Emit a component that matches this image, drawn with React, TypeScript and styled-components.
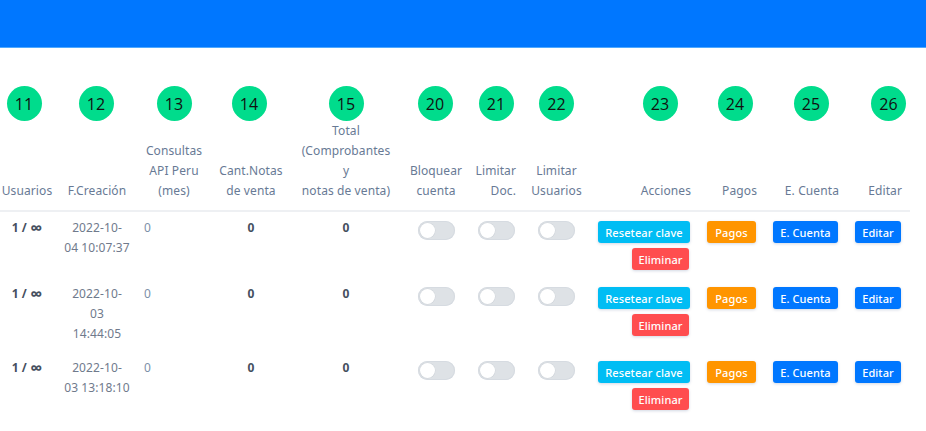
import React from "react";
import styled, { createGlobalStyle } from "styled-components";

const Global = createGlobalStyle`
  html, body { margin: 0; padding: 0; background: #ffffff; }
  body { font-family: "Noto Sans", "Open Sans", sans-serif; }
`;

const TopBar = styled.header`
  height: 47px;
  background: #0077ff;
  border-bottom: 1px solid #4fa9ff;
`;

const Content = styled.main`
  padding-top: 38px;
`;

const Table = styled.table`
  width: 910px;
  border-collapse: collapse;
  table-layout: fixed;
`;

type Align = "left" | "center" | "right";

const Col = styled.col<{ $w: number }>`
  width: ${(p) => p.$w}px;
`;

const BadgeCell = styled.th<{ $shift: number }>`
  padding: 0;
  text-align: center;
  & > span {
    transform: translateX(${(p) => p.$shift}px);
  }
`;

const Badge = styled.span`
  display: inline-flex;
  align-items: center;
  justify-content: center;
  width: 35px;
  height: 35px;
  border-radius: 50%;
  background: #00dc8c;
  color: #111111;
  font-family: "Open Sans", "Noto Sans", sans-serif;
  font-size: 16px;
  font-weight: 400;
`;

const HeadCell = styled.th<{ $align: Align; $pr?: number }>`
  vertical-align: bottom;
  text-align: ${(p) => p.$align};
  padding: 0 ${(p) => p.$pr ?? 0}px 9px 0;
  border-bottom: 2px solid #eef0f3;
  font-size: 12px;
  font-weight: 400;
  line-height: 20px;
  letter-spacing: 0.1px;
  color: #687a95;
  white-space: pre-line;
`;

const Cell = styled.td<{ $align: Align; $pl?: number; $pr?: number }>`
  vertical-align: top;
  text-align: ${(p) => p.$align};
  padding: 6px ${(p) => p.$pr ?? 0}px 8px ${(p) => p.$pl ?? 0}px;
  font-size: 12px;
  line-height: 20px;
  letter-spacing: 0.1px;
  color: #707a8c;
  white-space: pre-line;
`;

const Strong = styled.span`
  font-weight: 700;
  color: #46505f;
`;

const Infinity = styled.span`
  font-size: 17px;
  font-weight: 700;
  line-height: 20px;
  vertical-align: top;
`;

const Muted = styled.span`
  color: #7d8fa8;
`;

const Toggle = styled.span`
  display: inline-block;
  position: relative;
  width: 37px;
  height: 19px;
  border-radius: 10px;
  background: #dee2e6;
  vertical-align: top;
  box-shadow: inset 0 0 0 1px #d6dbe1;
  &::after {
    content: "";
    position: absolute;
    left: 2px;
    top: 2px;
    width: 15px;
    height: 15px;
    border-radius: 50%;
    background: #ffffff;
    box-shadow: 0 0 0 0.5px #cfd4da;
  }
`;

const Stack = styled.div`
  display: flex;
  flex-direction: column;
  align-items: flex-end;
  gap: 5px;
  padding-top: 3px;
`;

const Btn = styled.button<{ $bg: string; $w: number; $mr?: number }>`
  width: ${(p) => p.$w}px;
  height: 22px;
  padding: 0;
  border: none;
  border-radius: 3px;
  background: ${(p) => p.$bg};
  color: #ffffff;
  font-family: "Noto Sans", sans-serif;
  font-size: 11px;
  font-weight: 500;
  letter-spacing: 0.1px;
  box-shadow: 0 1px 3px rgba(0, 40, 100, 0.18);
  cursor: pointer;
  margin-right: ${(p) => p.$mr ?? 0}px;
`;

const BtnWrap = styled.div`
  padding-top: 3px;
`;

const cols = [54, 86, 68, 86, 104, 76, 48, 69, 106, 66, 82, 65];

const badges: [string, number][] = [
  ["11", -3],
  ["12", -1],
  ["13", 0],
  ["14", -2],
  ["15", 0],
  ["20", -1],
  ["21", -2],
  ["22", 0],
  ["23", 16],
  ["24", 5],
  ["25", 7],
  ["26", 11],
];

const rows = [
  { date: "2022-10-\n04 10:07:37" },
  { date: "2022-10-\n03\n14:44:05" },
  { date: "2022-10-\n03 13:18:10" },
];

export default function App() {
  return (
    <>
      <Global />
      <TopBar />
      <Content>
        <Table>
          <colgroup>
            {cols.map((w, i) => (
              <Col key={i} $w={w} />
            ))}
          </colgroup>
          <thead>
            <tr>
              {badges.map(([n, s]) => (
                <BadgeCell key={n} $shift={s}>
                  <Badge>{n}</Badge>
                </BadgeCell>
              ))}
            </tr>
            <tr>
              <HeadCell $align="center">Usuarios</HeadCell>
              <HeadCell $align="center">F.Creación</HeadCell>
              <HeadCell $align="center">{"Consultas\nAPI Peru\n(mes)"}</HeadCell>
              <HeadCell $align="center">{"Cant.Notas\nde venta"}</HeadCell>
              <HeadCell $align="center">{"Total\n(Comprobantes\ny\nnotas de venta)"}</HeadCell>
              <HeadCell $align="center">{"Bloquear\ncuenta"}</HeadCell>
              <HeadCell $align="right" $pr={6}>{"Limitar\nDoc."}</HeadCell>
              <HeadCell $align="center">{"Limitar\nUsuarios"}</HeadCell>
              <HeadCell $align="right" $pr={6}>Acciones</HeadCell>
              <HeadCell $align="right" $pr={6}>Pagos</HeadCell>
              <HeadCell $align="right" $pr={6}>E. Cuenta</HeadCell>
              <HeadCell $align="right" $pr={8}>Editar</HeadCell>
            </tr>
          </thead>
          <tbody>
            {rows.map((r, i) => (
              <tr key={i}>
                <Cell $align="center">
                  <Strong>
                    1 / <Infinity>∞</Infinity>
                  </Strong>
                </Cell>
                <Cell $align="center">{r.date}</Cell>
                <Cell $align="left" $pl={4}>
                  <Muted>0</Muted>
                </Cell>
                <Cell $align="center">
                  <Strong>0</Strong>
                </Cell>
                <Cell $align="center">
                  <Strong>0</Strong>
                </Cell>
                <Cell $align="center">
                  <BtnWrap>
                    <Toggle />
                  </BtnWrap>
                </Cell>
                <Cell $align="right" $pr={7}>
                  <BtnWrap>
                    <Toggle />
                  </BtnWrap>
                </Cell>
                <Cell $align="center">
                  <BtnWrap>
                    <Toggle />
                  </BtnWrap>
                </Cell>
                <Cell $align="right" $pr={7}>
                  <Stack>
                    <Btn $bg="#00bdf4" $w={92}>Resetear clave</Btn>
                    <Btn $bg="#ff4d4f" $w={57} $mr={1}>Eliminar</Btn>
                  </Stack>
                </Cell>
                <Cell $align="right" $pr={7}>
                  <BtnWrap>
                    <Btn $bg="#ff9500" $w={49}>Pagos</Btn>
                  </BtnWrap>
                </Cell>
                <Cell $align="right" $pr={7}>
                  <BtnWrap>
                    <Btn $bg="#0077ff" $w={65}>E. Cuenta</Btn>
                  </BtnWrap>
                </Cell>
                <Cell $align="right" $pr={9}>
                  <BtnWrap>
                    <Btn $bg="#0077ff" $w={46}>Editar</Btn>
                  </BtnWrap>
                </Cell>
              </tr>
            ))}
          </tbody>
        </Table>
      </Content>
    </>
  );
}
